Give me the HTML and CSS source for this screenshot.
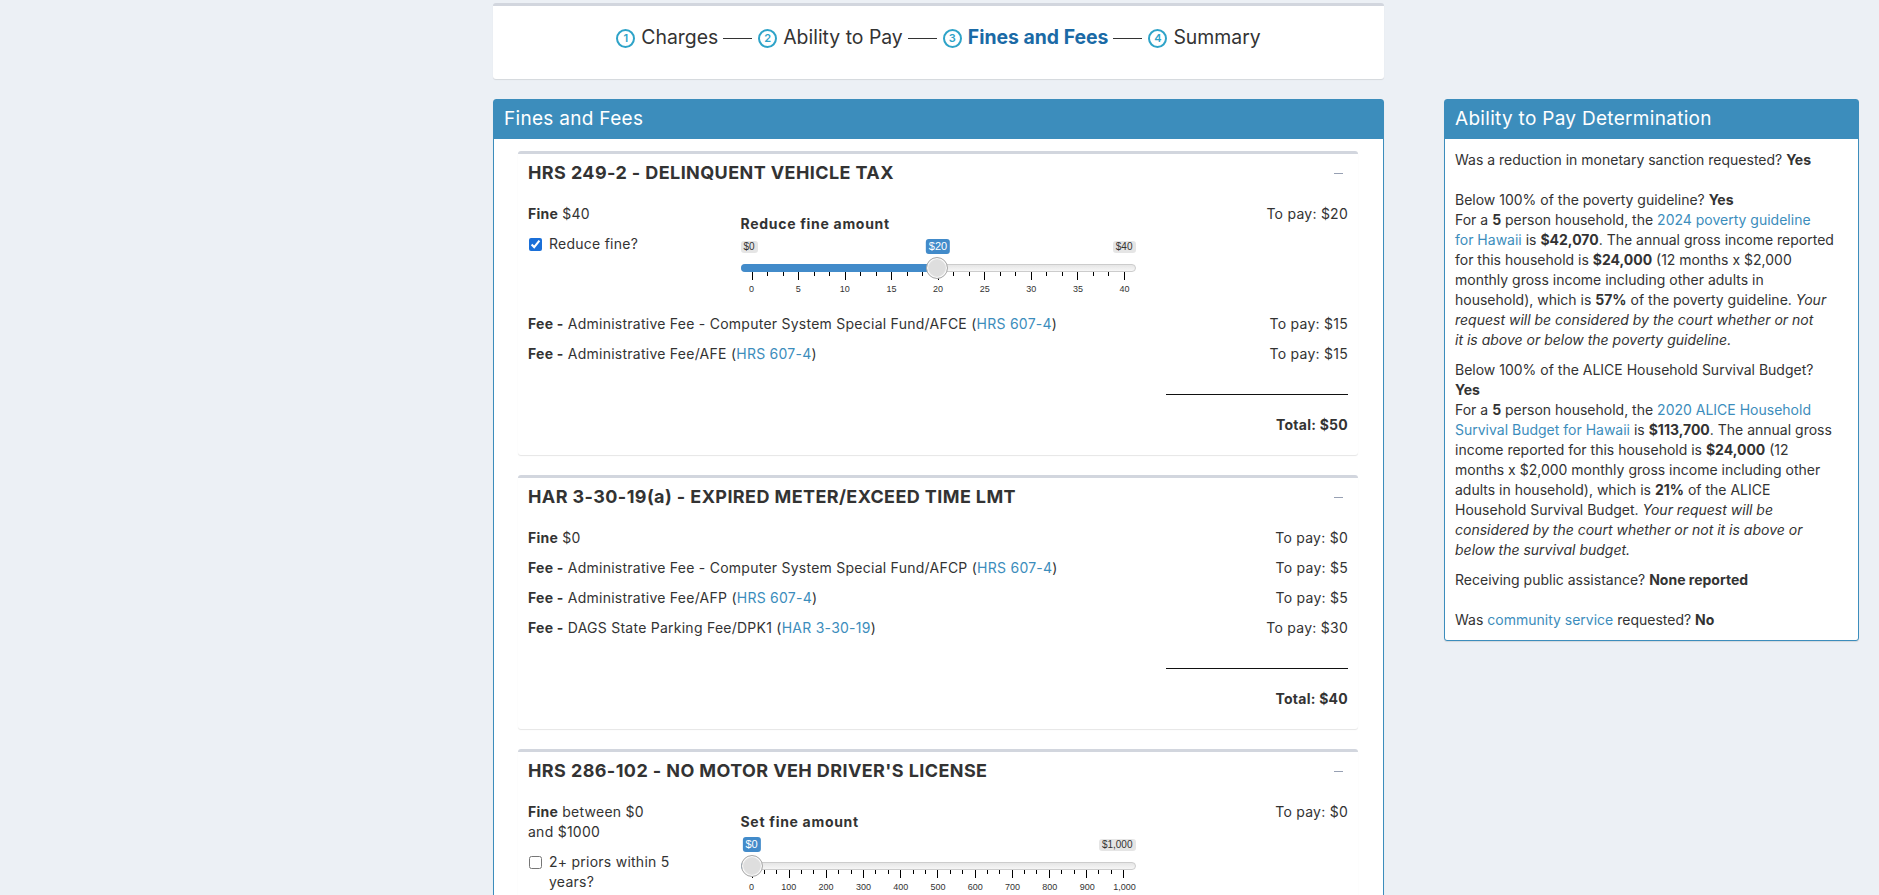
FILE: index.html
```html
<!DOCTYPE html>
<html lang="en">
<head>
<meta charset="utf-8">
<title>Fines and Fees</title>
<link rel="stylesheet" href="styles.css">
</head>
<body>
<div class="page">
  <nav class="stepper-card">
    <ol class="stepper">
      <li class="step"><span class="step-num">1</span><span>Charges</span></li>
      <li class="step-sep"></li>
      <li class="step"><span class="step-num">2</span><span>Ability to Pay</span></li>
      <li class="step-sep"></li>
      <li class="step active"><span class="step-num">3</span><span>Fines and Fees</span></li>
      <li class="step-sep"></li>
      <li class="step"><span class="step-num">4</span><span>Summary</span></li>
    </ol>
  </nav>

  <section class="panel fines-panel">
    <header class="panel-head">Fines and Fees</header>
    <div class="panel-body fines-body">

      <article class="box">
        <div class="box-head">
          <h3 class="box-title">HRS 249-2 - DELINQUENT VEHICLE TAX</h3>
          <button class="box-tool" aria-label="Collapse"><span class="minus"></span></button>
        </div>
        <div class="box-body">
          <div class="row row-3">
            <div class="col">
              <div><b>Fine</b> $40</div>
              <label class="check"><input type="checkbox" checked><span>Reduce fine?</span></label>
            </div>
            <div class="col">
              <div class="slider-group">
                <div class="slider-label">Reduce fine amount</div>
                <div class="irs" style="--f:0.5">
                  <div class="irs-top">
                    <span class="irs-min">$0</span>
                    <span class="irs-max">$40</span>
                    <span class="irs-single">$20</span>
                  </div>
                  <div class="irs-line">
                    <span class="irs-bar"></span>
                    <span class="irs-handle"></span>
                  </div>
                  <div class="irs-ticks">
                    <i class="b"></i><i></i><i></i><i class="b"></i><i></i><i></i><i class="b"></i><i></i><i></i><i class="b"></i><i></i><i></i><i class="b"></i><i></i><i></i><i class="b"></i><i></i><i></i><i class="b"></i><i></i><i></i><i class="b"></i><i></i><i></i><i class="b"></i>
                  </div>
                  <div class="irs-nums">
                    <span>0</span><span>5</span><span>10</span><span>15</span><span>20</span><span>25</span><span>30</span><span>35</span><span>40</span>
                  </div>
                </div>
              </div>
            </div>
            <div class="col pay">To pay: $20</div>
          </div>
          <div class="row row-fee"><div class="col"><b>Fee -</b> Administrative Fee - Computer System Special Fund/AFCE (<a href="#">HRS 607-4</a>)</div><div class="col pay">To pay: $15</div></div>
          <div class="row row-fee"><div class="col"><b>Fee -</b> Administrative Fee/AFE (<a href="#">HRS 607-4</a>)</div><div class="col pay">To pay: $15</div></div>
          <div class="row row-fee row-total"><div class="col"></div><div class="col"><hr class="sum-line"><p class="sum"><b>Total: $50</b></p></div></div>
        </div>
      </article>

      <article class="box">
        <div class="box-head">
          <h3 class="box-title">HAR 3-30-19(a) - EXPIRED METER/EXCEED TIME LMT</h3>
          <button class="box-tool" aria-label="Collapse"><span class="minus"></span></button>
        </div>
        <div class="box-body">
          <div class="row row-fee"><div class="col"><b>Fine</b> $0</div><div class="col pay">To pay: $0</div></div>
          <div class="row row-fee"><div class="col"><b>Fee -</b> Administrative Fee - Computer System Special Fund/AFCP (<a href="#">HRS 607-4</a>)</div><div class="col pay">To pay: $5</div></div>
          <div class="row row-fee"><div class="col"><b>Fee -</b> Administrative Fee/AFP (<a href="#">HRS 607-4</a>)</div><div class="col pay">To pay: $5</div></div>
          <div class="row row-fee"><div class="col"><b>Fee -</b> DAGS State Parking Fee/DPK1 (<a href="#">HAR 3-30-19</a>)</div><div class="col pay">To pay: $30</div></div>
          <div class="row row-fee row-total"><div class="col"></div><div class="col"><hr class="sum-line"><p class="sum"><b>Total: $40</b></p></div></div>
        </div>
      </article>

      <article class="box">
        <div class="box-head">
          <h3 class="box-title">HRS 286-102 - NO MOTOR VEH DRIVER'S LICENSE</h3>
          <button class="box-tool" aria-label="Collapse"><span class="minus"></span></button>
        </div>
        <div class="box-body">
          <div class="row row-3">
            <div class="col">
              <div><b>Fine</b> between $0<br>and $1000</div>
              <label class="check"><input type="checkbox"><span>2+ priors within 5 years?</span></label>
            </div>
            <div class="col">
              <div class="slider-group">
                <div class="slider-label">Set fine amount</div>
                <div class="irs" style="--f:0">
                  <div class="irs-top">
                    <span class="irs-min hidden">$0</span>
                    <span class="irs-max">$1,000</span>
                    <span class="irs-single">$0</span>
                  </div>
                  <div class="irs-line">
                    <span class="irs-bar"></span>
                    <span class="irs-handle"></span>
                  </div>
                  <div class="irs-ticks">
                    <i class="b"></i><i></i><i></i><i class="b"></i><i></i><i></i><i class="b"></i><i></i><i></i><i class="b"></i><i></i><i></i><i class="b"></i><i></i><i></i><i class="b"></i><i></i><i></i><i class="b"></i><i></i><i></i><i class="b"></i><i></i><i></i><i class="b"></i><i></i><i></i><i class="b"></i><i></i><i></i><i class="b"></i>
                  </div>
                  <div class="irs-nums">
                    <span>0</span><span>100</span><span>200</span><span>300</span><span>400</span><span>500</span><span>600</span><span>700</span><span>800</span><span>900</span><span>1,000</span>
                  </div>
                </div>
              </div>
            </div>
            <div class="col pay">To pay: $0</div>
          </div>
        </div>
      </article>

    </div>
  </section>

  <aside class="panel atp-panel">
    <header class="panel-head">Ability to Pay Determination</header>
    <div class="panel-body atp-body">
      <p>Was a reduction in monetary sanction requested? <b>Yes</b><br><br>Below 100% of the poverty guideline? <b>Yes</b><br>For a <b>5</b> person household, the <a href="#">2024 poverty guideline<br>for Hawaii</a> is <b>$42,070</b>. The annual gross income reported<br>for this household is <b>$24,000</b> (12 months x $2,000<br>monthly gross income including other adults in<br>household), which is <b>57%</b> of the poverty guideline. <i>Your<br>request will be considered by the court whether or not<br>it is above or below the poverty guideline.</i></p>
      <p>Below 100% of the ALICE Household Survival Budget?<br><b>Yes</b><br>For a <b>5</b> person household, the <a href="#">2020 ALICE Household<br>Survival Budget for Hawaii</a> is <b>$113,700</b>. The annual gross<br>income reported for this household is <b>$24,000</b> (12<br>months x $2,000 monthly gross income including other<br>adults in household), which is <b>21%</b> of the ALICE<br>Household Survival Budget. <i>Your request will be<br>considered by the court whether or not it is above or<br>below the survival budget.</i></p>
      <p>Receiving public assistance? <b>None reported</b><br><br>Was <a href="#">community service</a> requested? <b>No</b></p>
    </div>
  </aside>
</div>
</body>
</html>
```
FILE: styles.css
```css
* { box-sizing: border-box; }
html, body { margin: 0; }
body {
  background: #ecf0f5;
  font-family: Inter, "Noto Sans", sans-serif;
  font-size: 14px;
  line-height: 20px;
  color: #333;
}
a { color: #3c8dbc; text-decoration: none; }
b { font-weight: 700; }
p { margin: 0 0 10px; }

.page {
  display: grid;
  grid-template-columns: 891px 415px;
  column-gap: 60px;
  row-gap: 20px;
  padding: 3px 0 0 493px;
  align-items: start;
}

/* stepper */
.stepper-card {
  grid-column: 1;
  background: #fff;
  border-top: 3px solid #d2d6de;
  border-radius: 3px;
  box-shadow: 0 1px 1px rgba(0,0,0,.1);
  padding: 20px 0 31px;
}
.stepper {
  display: flex;
  justify-content: center;
  align-items: center;
  list-style: none;
  margin: 0;
  padding: 0;
  font-size: 19.4px;
  line-height: 22px;
  color: #333;
}
.step { display: flex; align-items: center; gap: 6px; }
.step.active { color: #1a6aa6; font-weight: 700; }
.step-num {
  width: 19px;
  height: 19px;
  border: 2px solid #2ea3c8;
  border-radius: 50%;
  color: #2ea3c8;
  font-size: 11px;
  font-weight: 600;
  line-height: 1;
  display: flex;
  align-items: center;
  justify-content: center;
  margin-top: 3px;
}
.step-sep { width: 29px; height: 1px; background: #333; margin: 2px 6px 0 5px; }

/* panels */
.panel {
  background: #fff;
  border: 1px solid #3c8dbc;
  border-radius: 3px;
  box-shadow: 0 1px 1px rgba(0,0,0,.1);
}
.panel-head {
  background: #3c8dbc;
  color: #fff;
  font-size: 19px;
  letter-spacing: 0.3px;
  line-height: 20px;
  padding: 9px 10px 10px;
}
.fines-panel { grid-column: 1; }
.atp-panel { grid-column: 2; grid-row: 2; }
.fines-body { padding: 12px 25px 0 24px; }
.atp-body { padding: 11px 10px 10px; }
.atp-body p:last-child { margin-bottom: 0; }

/* boxes */
.box {
  background: #fff;
  border-top: 3px solid #d2d6de;
  border-radius: 3px;
  box-shadow: 0 1px 1px rgba(0,0,0,.1);
  margin-bottom: 20px;
}
.box-head {
  display: flex;
  align-items: center;
  justify-content: space-between;
  padding: 10px 10px 12px;
}
.box-title {
  margin: 0;
  font-size: 18px;
  line-height: 18px;
  font-weight: 700;
  letter-spacing: 0.4px;
  color: #333;
}
.box-tool {
  background: none;
  border: 0;
  padding: 5px;
  display: flex;
  cursor: pointer;
}
.minus { display: block; width: 9px; height: 1px; background: #97a0b3; }
.box-body { padding: 10px; letter-spacing: 0.25px; }

.row { display: grid; margin: 0 -15px; }
.row > .col { padding: 0 15px; min-width: 0; }
.row-3 { grid-template-columns: 25% 50% 25%; }
.row-fee { grid-template-columns: 75% 25%; margin-bottom: 10px; }
.row-total { margin-bottom: 0; }
.pay { text-align: right; }

.check {
  display: flex;
  align-items: flex-start;
  margin-top: 10px;
  cursor: pointer;
}
.check input {
  width: 13px;
  height: 13px;
  margin: 4px 7px 0 1px;
  flex: none;
  accent-color: #1a6fd8;
}

.sum-line { border: 0; border-top: 1px solid #111; margin: 20px 0; }
.sum { text-align: right; }

/* slider */
.slider-group { margin: 10px 0 15px; }
.slider-label { font-weight: 700; margin-bottom: 5px; letter-spacing: 0.7px; }
.irs {
  position: relative;
  height: 60px;
  font-family: "Liberation Sans", Arial, sans-serif;
  letter-spacing: 0;
}
.irs-top {
  position: relative;
  display: flex;
  justify-content: space-between;
  align-items: flex-start;
  height: 25px;
}
.irs-min, .irs-max {
  margin-top: 2px;
  font-size: 10px;
  line-height: 12px;
  padding: 0 3px;
  background: rgba(0,0,0,.1);
  color: #333;
  border-radius: 3px;
}
.irs-min.hidden { visibility: hidden; }
.irs-single {
  position: absolute;
  top: 0;
  left: calc(11px + (100% - 22px) * var(--f));
  transform: translateX(-50%);
  font-size: 11px;
  line-height: 13px;
  padding: 1px 3px;
  background: #428bca;
  color: #fff;
  border-radius: 3px;
  white-space: nowrap;
}
.irs-line {
  position: relative;
  height: 8px;
  border: 1px solid #ccc;
  border-radius: 8px;
  background: linear-gradient(to bottom, #ddd -50%, #fff 150%);
}
.irs-bar {
  position: absolute;
  top: -1px;
  left: -1px;
  height: 8px;
  width: calc(11px + (100% - 22px) * var(--f));
  background: #428bca;
  border-radius: 8px 0 0 8px;
}
.irs-handle {
  position: absolute;
  top: -8px;
  left: calc(11px + (100% - 22px) * var(--f) - 1px);
  width: 22px;
  height: 22px;
  transform: translateX(-50%);
  border: 1px solid #ababab;
  background: #dedede;
  border-radius: 50%;
  box-shadow: inset 0 0 1px 1px #fff;
}
.irs-ticks {
  display: flex;
  justify-content: space-between;
  align-items: flex-start;
  height: 8px;
  margin: 0 11px;
}
.irs-ticks i { display: block; width: 1px; height: 4px; background: #000; }
.irs-ticks i.b { height: 8px; }
.irs-nums {
  display: flex;
  justify-content: space-between;
  margin: 5px 11px 0;
  font-size: 9px;
  line-height: 9px;
  color: #333;
}
.irs-nums span { width: 0; display: flex; justify-content: center; white-space: nowrap; }
```
